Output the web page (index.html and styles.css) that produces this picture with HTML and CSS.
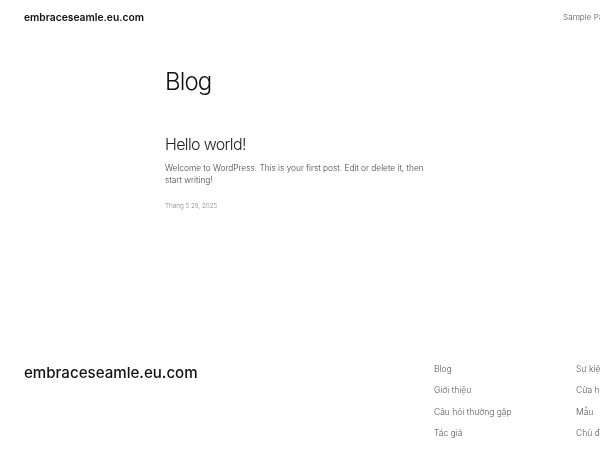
FILE: index.html
```html
<!DOCTYPE html>
<html lang="vi">
<head>
    <meta charset="UTF-8">
    <title>embraceseamle.eu.com</title>
    <link rel="stylesheet" href="styles.css">
</head>
<body>
    <div class="page">
        <header class="site-header">
            <a class="site-name" href="#">embraceseamle.eu.com</a>
            <nav class="site-nav"><a href="#">Sample Page</a></nav>
        </header>

        <main class="content">
            <h1 class="page-title">Blog</h1>
            <article class="post">
                <h2 class="post-title">Hello world!</h2>
                <p class="post-text">Welcome to WordPress. This is your first post. Edit or delete it, then start writing!</p>
                <div class="post-date">Tháng 5 29, 2025</div>
            </article>
        </main>

        <footer class="site-footer">
            <a class="footer-name" href="#">embraceseamle.eu.com</a>
            <div class="footer-links">
                <ul class="footer-col">
                    <li>Blog</li>
                    <li>Giới thiệu</li>
                    <li>Câu hỏi thường gặp</li>
                    <li>Tác giả</li>
                </ul>
                <ul class="footer-col">
                    <li>Sự kiện</li>
                    <li>Cửa hàng</li>
                    <li>Mẫu</li>
                    <li>Chủ đề</li>
                </ul>
            </div>
        </footer>
    </div>
</body>
</html>
```

FILE: styles.css
```css
html, body {
    margin: 0;
    height: 100%;
    overflow: hidden;
    background-color: #fff;
}

body {
    font-family: Inter, 'Noto Sans', sans-serif;
    color: #111;
}

a {
    color: inherit;
    text-decoration: none;
}

.page {
    width: 637px;
    height: 450px;
    display: flex;
    flex-direction: column;
    filter: blur(0.35px);
}

.site-header {
    display: flex;
    justify-content: space-between;
    align-items: center;
    padding: 10px 24px 0;
    height: 14px;
}

.site-name {
    font-size: 10.3px;
    font-weight: 600;
}

.site-nav {
    font-size: 8.2px;
    font-weight: 300;
    color: #555;
}

.content {
    flex: 1;
    padding-left: 165px;
}

.page-title {
    font-size: 24px;
    font-weight: 300;
    letter-spacing: -0.9px;
    line-height: 30px;
    margin: 43px 0 0;
}

.post {
    width: 262px;
    margin-top: 37px;
}

.post-title {
    font-size: 16px;
    font-weight: 300;
    letter-spacing: -0.65px;
    line-height: 20px;
    margin: 0;
    color: #222;
}

.post-text {
    font-size: 8.3px;
    font-weight: 300;
    line-height: 12.4px;
    margin: 7.5px 0 0;
    color: #444;
}

.post-date {
    font-size: 6.3px;
    font-weight: 300;
    color: #888;
    margin-top: 16px;
}

.site-footer {
    display: flex;
    justify-content: space-between;
    padding: 0 24px;
    height: 95px;
}

.footer-name {
    font-size: 15.1px;
    font-weight: 500;
    line-height: 18px;
    margin-top: 9px;
}

.footer-links {
    display: flex;
}

.footer-col {
    list-style: none;
    margin: 0;
    padding: 7px 0 0;
    width: 142px;
    font-size: 8.5px;
    font-weight: 300;
    color: #555;
}

.footer-col li {
    height: 21.3px;
    line-height: 14px;
}

.footer-col:last-child {
    width: 37px;
    white-space: nowrap;
}
```
